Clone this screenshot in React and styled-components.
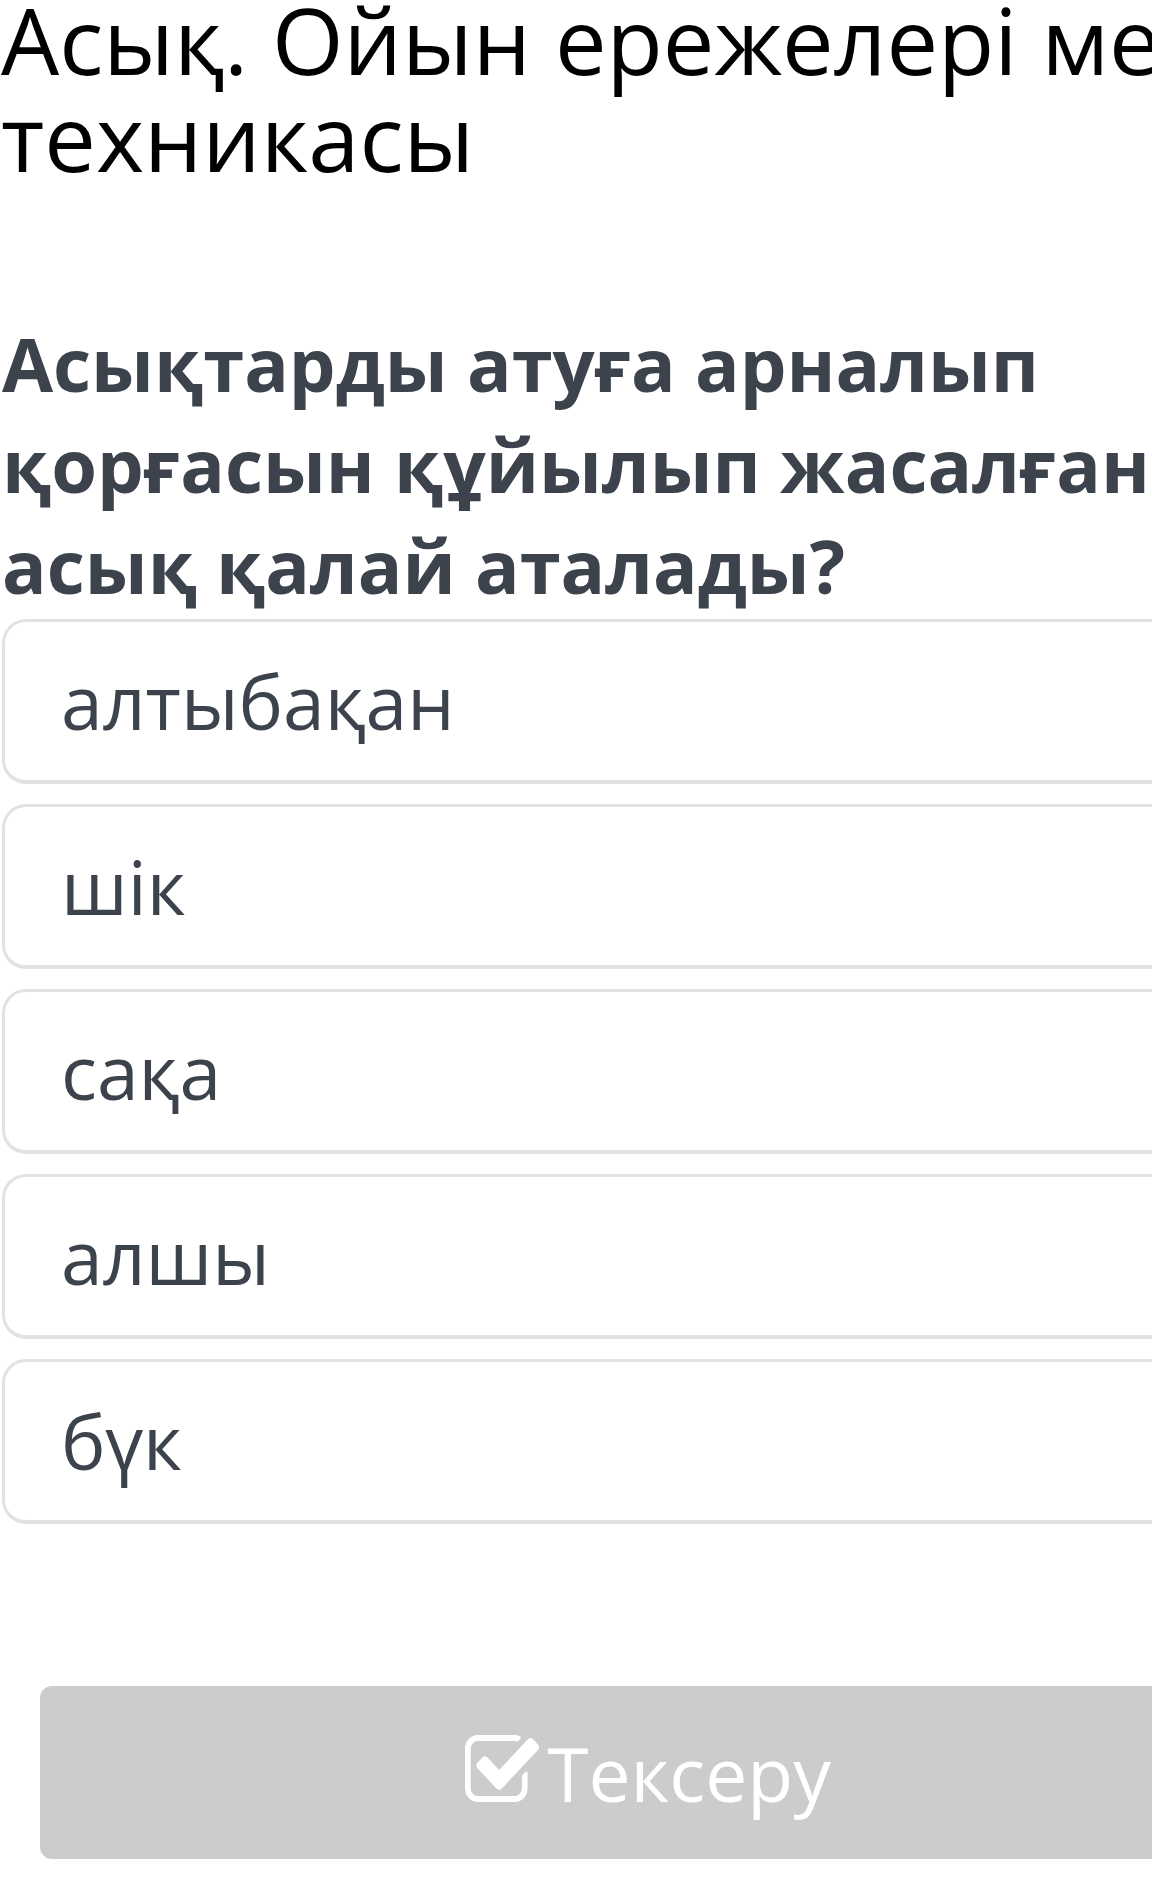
import React from 'react';
import styled, { createGlobalStyle } from 'styled-components';

const GlobalStyle = createGlobalStyle`
  html, body {
    margin: 0;
    padding: 0;
    background: #ffffff;
    overflow: hidden;
  }
  body {
    font-family: "Open Sans", "Noto Sans", "DejaVu Sans", sans-serif;
  }
`;

const Page = styled.div`
  width: 1296px;
  padding-left: 2px;
  box-sizing: border-box;
  min-height: 1881px;
`;

const LessonTitle = styled.h1`
  margin: -9px 0 0 -1px;
  font-size: 92px;
  line-height: 97px;
  font-weight: 400;
  color: #000000;
`;

const Question = styled.h2`
  margin: 128px 0 0 0;
  font-size: 74px;
  line-height: 101px;
  font-weight: 700;
  color: #3c434d;
`;

const Options = styled.div`
  display: flex;
  flex-direction: column;
  gap: 20px;
  margin-top: 3px;
`;

const OptionCard = styled.div`
  height: 165px;
  box-sizing: border-box;
  display: flex;
  align-items: center;
  padding: 0 56px;
  background: #ffffff;
  border: 3px solid #e0e2e5;
  border-bottom-width: 4px;
  border-radius: 24px;
  font-size: 75px;
  color: #3c434d;
  cursor: pointer;
`;

const CheckButton = styled.button`
  display: flex;
  align-items: center;
  justify-content: center;
  gap: 8px;
  width: calc(100% - 78px);
  height: 173px;
  margin: 162px 0 0 38px;
  border: none;
  border-radius: 12px;
  background: #cccccc;
  color: #ffffff;
  font-family: inherit;
  font-size: 75px;
  font-weight: 400;
  cursor: not-allowed;
`;

const CheckIcon = styled.svg`
  width: 74px;
  height: 67px;
  margin-bottom: 8px;
  fill: currentColor;
`;

const options = ['алтыбақан', 'шік', 'сақа', 'алшы', 'бүк'];

const App = () => (
  <Page>
    <GlobalStyle />
    <LessonTitle>Асық. Ойын ережелері мен техникасы</LessonTitle>
    <Question>Асықтарды атуға арналып қорғасын құйылып жасалған асық қалай аталады?</Question>
    <Options>
      {options.map((option) => (
        <OptionCard key={option}>{option}</OptionCard>
      ))}
    </Options>
    <CheckButton disabled>
      <CheckIcon viewBox="64 128 1664 1408" preserveAspectRatio="none">
        <path d="M1472 930v318q0 119-84.5 203.5t-203.5 84.5h-832q-119 0-203.5-84.5t-84.5-203.5v-832q0-119 84.5-203.5t203.5-84.5h832q63 0 117 25 15 7 18 23 3 17-9 29l-49 49q-10 10-23 10-3 0-9-2-23-6-45-6h-832q-66 0-113 47t-47 113v832q0 66 47 113t113 47h832q66 0 113-47t47-113v-254q0-13 9-22l64-64q10-10 23-10 6 0 12 3 20 8 20 29zm231-489l-814 814q-24 24-57 24t-57-24l-430-430q-24-24-24-57t24-57l110-110q24-24 57-24t57 24l263 263 647-647q24-24 57-24t57 24l110 110q24 24 24 57t-24 57z" />
      </CheckIcon>
      Тексеру
    </CheckButton>
  </Page>
);

export default App;
